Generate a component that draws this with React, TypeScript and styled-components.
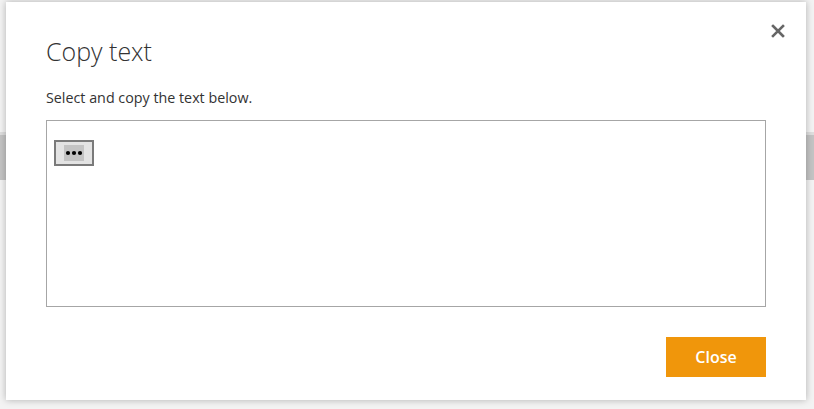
import React from "react";
import styled, { createGlobalStyle } from "styled-components";

const Global = createGlobalStyle`
  html, body { margin: 0; padding: 0; }
  body {
    background: #f3f3f3;
    font-family: "Open Sans", "Noto Sans", sans-serif;
    width: 814px;
    height: 409px;
    overflow: hidden;
  }
`;

const Page = styled.div`
  position: relative;
  width: 814px;
  height: 409px;
  display: flex;
  flex-direction: column;
`;

const TopArea = styled.div`
  height: 132px;
`;

const HeaderBand = styled.div`
  height: 45px;
  background: #c4c4c4;
  border-top: 3px solid #dedede;
`;

const Dialog = styled.div`
  position: absolute;
  left: 6px;
  top: 2px;
  width: 800px;
  height: 398px;
  box-sizing: border-box;
  background: #ffffff;
  box-shadow: 0 0 7px rgba(0, 0, 0, 0.28);
  padding: 33px 40px 0 40px;
  display: flex;
  flex-direction: column;
`;

const CloseX = styled.button`
  position: absolute;
  top: 19px;
  right: 18px;
  width: 20px;
  height: 20px;
  padding: 0;
  border: none;
  background: transparent;
  display: flex;
  align-items: center;
  justify-content: center;
`;

const Title = styled.h1`
  margin: 0;
  font-family: "Open Sans", sans-serif;
  font-weight: 300;
  font-size: 25px;
  line-height: 32px;
  color: #333333;
`;

const Subtitle = styled.p`
  margin: 22px 0 0 0;
  font-family: "Open Sans", sans-serif;
  font-size: 14.3px;
  line-height: 18px;
  color: #333333;
`;

const TextBox = styled.div`
  margin-top: 13px;
  height: 187px;
  box-sizing: border-box;
  border: 1px solid #a6a6a6;
  padding: 19px 0 0 7px;
`;

const EllipsisButton = styled.div`
  width: 40px;
  height: 26px;
  box-sizing: border-box;
  border: 2px solid #7a7a7a;
  background: #e3e3e3;
  display: flex;
  align-items: center;
  justify-content: center;
`;

const Selected = styled.span`
  width: 20px;
  height: 16px;
  background: #c3c3c3;
  display: flex;
  align-items: center;
  justify-content: center;
`;

const Footer = styled.div`
  margin-top: 30px;
  display: flex;
  justify-content: flex-end;
`;

const PrimaryButton = styled.button`
  width: 100px;
  height: 40px;
  border: none;
  background: #f0960b;
  color: #ffffff;
  font-family: "Open Sans", sans-serif;
  font-size: 16px;
  font-weight: 600;
  padding: 0;
`;

export default function App() {
  return (
    <>
      <Global />
      <Page>
        <TopArea />
        <HeaderBand />
        <Dialog>
          <CloseX aria-label="Close">
            <svg width="14" height="14" viewBox="0 0 14 14">
              <path d="M2 2 L12 12 M12 2 L2 12" stroke="#666666" strokeWidth="2.6" strokeLinecap="square" />
            </svg>
          </CloseX>
          <Title>Copy text</Title>
          <Subtitle>Select and copy the text below.</Subtitle>
          <TextBox>
            <EllipsisButton>
              <Selected>
                <svg width="18" height="6" viewBox="0 0 18 6">
                  <circle cx="3" cy="3" r="2.1" fill="#000" />
                  <circle cx="9" cy="3" r="2.1" fill="#000" />
                  <circle cx="15" cy="3" r="2.1" fill="#000" />
                </svg>
              </Selected>
            </EllipsisButton>
          </TextBox>
          <Footer>
            <PrimaryButton>Close</PrimaryButton>
          </Footer>
        </Dialog>
      </Page>
    </>
  );
}
